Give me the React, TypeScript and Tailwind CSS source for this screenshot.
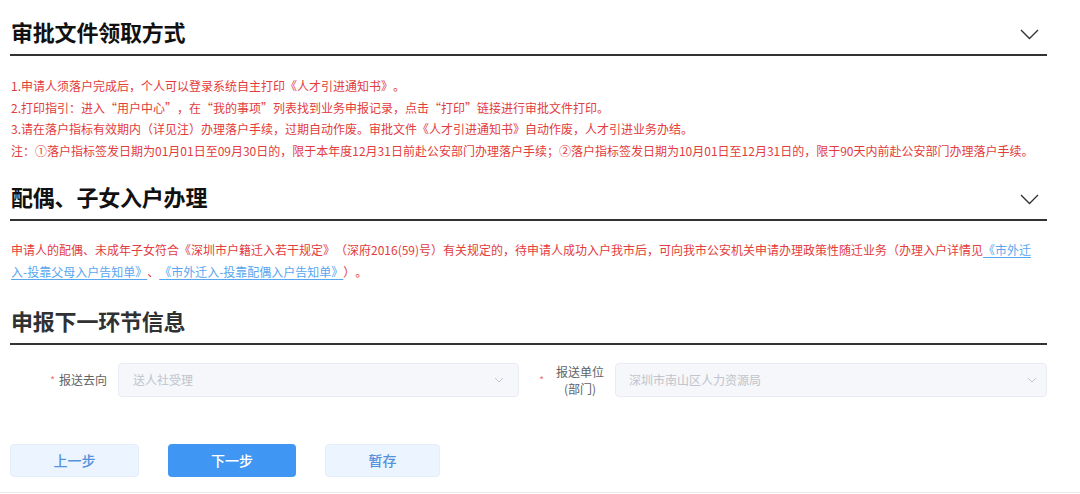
import React from "react";

const FONT = { fontFamily: '"Noto Sans CJK SC", "Noto Sans", sans-serif' };

function Chevron() {
  return (
    <svg width="19" height="11" viewBox="0 0 19 11" className="mr-[8px] mt-[3px]">
      <polyline points="1,1 9.5,9.5 18,1" fill="none" stroke="#333" strokeWidth="1.4" />
    </svg>
  );
}

function SectionHeader({ title, mt, color = "#111", chevron = true }: { title: string; mt: string; color?: string; chevron?: boolean }) {
  return (
    <div className={`flex h-[45px] items-center justify-between border-b-2 border-[#333] ${mt}`}>
      <h2 className="pb-[3px] pl-px text-[22px] font-bold leading-none tracking-[-0.2px]" style={{ color }}>
        {title}
      </h2>
      {chevron && <Chevron />}
    </div>
  );
}

function SelectChevron() {
  return (
    <svg width="10" height="6" viewBox="0 0 10 6">
      <polyline points="1,1 5,5 9,1" fill="none" stroke="#c0c4cc" strokeWidth="1" />
    </svg>
  );
}

export default function App() {
  return (
    <div className="h-[494px] w-[1080px] overflow-hidden bg-white [text-spacing-trim:space-all]" style={FONT}>
      <div className="w-[1047px] pl-[10px]">
        <SectionHeader title="审批文件领取方式" mt="mt-[11px]" />
        <div className="mt-[19px] pl-px text-[12px] leading-[21.6px] text-[#e23c3c]">
          <p>1.申请人须落户完成后，个人可以登录系统自主打印《人才引进通知书》。</p>
          <p>2.打印指引：进入“用户中心”，在“我的事项”列表找到业务申报记录，点击“打印”链接进行审批文件打印。</p>
          <p>3.请在落户指标有效期内（详见注）办理落户手续，过期自动作废。审批文件《人才引进通知书》自动作废，人才引进业务办结。</p>
          <p>注：①落户指标签发日期为01月01日至09月30日的，限于本年度12月31日前赴公安部门办理落户手续；②落户指标签发日期为10月01日至12月31日的，限于90天内前赴公安部门办理落户手续。</p>
        </div>

        <SectionHeader title="配偶、子女入户办理" mt="mt-[15px]" />
        <p className="mt-[18px] pl-px text-[12px] leading-[21.6px] text-[#e23c3c]">
          申请人的配偶、未成年子女符合《深圳市户籍迁入若干规定》（深府2016(59)号）有关规定的，待申请人成功入户我市后，可向我市公安机关申请办理政策性随迁业务（办理入户详情见
          <a className="text-[#58a6f0] underline underline-offset-2">《市外迁入-投靠父母入户告知单》</a>、
          <a className="text-[#58a6f0] underline underline-offset-2">《市外迁入-投靠配偶入户告知单》</a>）。
        </p>

        <SectionHeader title="申报下一环节信息" mt="mt-[17px]" color="#303133" chevron={false} />

        <div className="mt-[18px] flex h-[34px] items-stretch">
          <div className="flex w-[509px] items-stretch">
            <div className="flex w-[98px] items-center justify-end pr-px text-[12px] text-[#606266]">
              <span className="mr-[4px] text-[10px] text-[#f56c6c]">*</span>
              <span>报送去向</span>
            </div>
            <div className="ml-[10px] flex flex-1 items-center justify-between rounded-[4px] border border-[#e9ecf2] bg-[#f5f7fa] pl-[14px] pr-[14px] text-[12px] text-[#c0c4cc]">
              <span>送人社受理</span>
              <SelectChevron />
            </div>
          </div>
          <div className="flex flex-1 items-stretch">
            <div className="flex w-[96px] items-center justify-end pr-[11px] text-[12px] text-[#606266]">
              <span className="mr-[12px] text-[10px] text-[#f56c6c]">*</span>
              <span className="w-[48px] text-center leading-[17px]">
                报送单位
                <br />
                (部门)
              </span>
            </div>
            <div className="flex flex-1 items-center justify-between rounded-[4px] border border-[#e9ecf2] bg-[#f5f7fa] pl-[13px] pr-[9px] text-[12px] text-[#c0c4cc]">
              <span>深圳市南山区人力资源局</span>
              <SelectChevron />
            </div>
          </div>
        </div>

        <div className="mt-[47px] flex h-[33px] gap-[29px]">
          <button className="w-[129px] rounded-[4px] border border-[#e3eefb] bg-[#ecf5ff] text-[14px] font-medium text-[#5592dc]">
            上一步
          </button>
          <button className="w-[128px] rounded-[4px] bg-[#4096f3] text-[14px] font-medium text-white">
            下一步
          </button>
          <button className="w-[115px] rounded-[4px] border border-[#e3eefb] bg-[#ecf5ff] text-[14px] font-medium text-[#5592dc]">
            暂存
          </button>
        </div>
      </div>
      <div className="mt-[15px] h-px w-full bg-[#e8eaee]" />
    </div>
  );
}
